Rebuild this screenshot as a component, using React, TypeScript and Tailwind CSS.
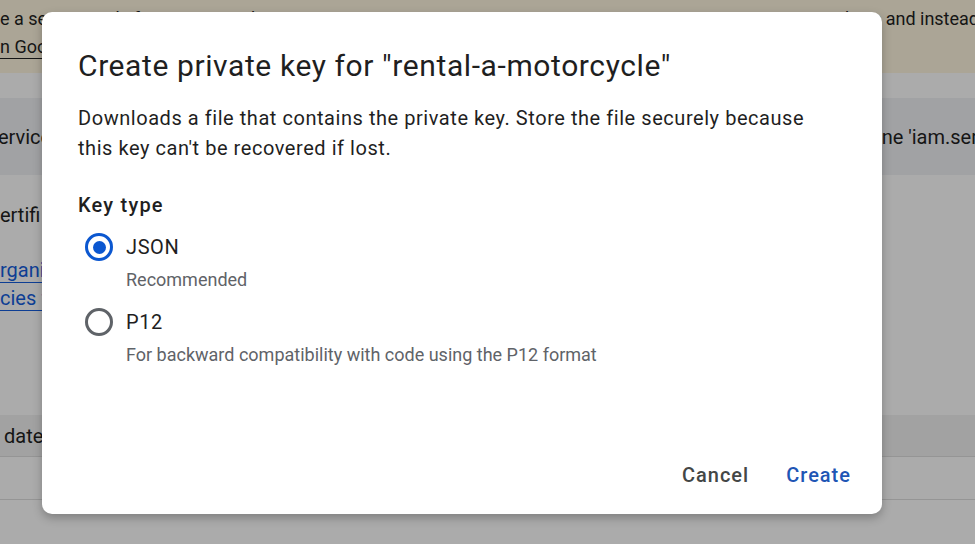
import React from "react";

const font = { fontFamily: "Roboto, 'Noto Sans', Arial, sans-serif" };

function Radio({ checked }: { checked: boolean }) {
  return (
    <div className="ml-[7px] mr-[13px] w-[28px] h-[28px] flex justify-center items-center">
      <div
        className={
          "w-[28px] h-[28px] rounded-full border-[3px] flex items-center justify-center " +
          (checked ? "border-[#0b57d0]" : "border-[#5f6368]")
        }
      >
        {checked && <div className="w-[13px] h-[13px] rounded-full bg-[#0b57d0]" />}
      </div>
    </div>
  );
}

export default function App() {
  return (
    <div className="relative w-[975px] h-[544px] overflow-hidden bg-[#ababab] text-[#151515]" style={font}>
      {/* background page (under scrim) */}
      <div className="flex flex-col w-full">
        <div className="h-[73px] bg-[#aba596] text-[18px] flex flex-col pt-[4px]">
          <div className="flex justify-between whitespace-nowrap h-[28px] items-center overflow-hidden">
            <span>e a security risk if compromised. We</span>
            <span className="mr-[-4px]">keys and instead</span>
          </div>
          <div className="h-[28px] flex items-center whitespace-nowrap">
            <span className="underline underline-offset-[5px] decoration-[1px]">n Google Cloud</span>
          </div>
        </div>
        <div className="h-[25px]" />
        <div className="h-[77px] bg-[#a1a2a4] text-[20px] flex justify-between items-center whitespace-nowrap overflow-hidden">
          <span className="ml-[-2px]">ervice</span>
          <span className="mr-[-3px]">ne 'iam.ser</span>
        </div>
        <div className="h-[240px] text-[20px] whitespace-nowrap">
          <div className="h-[28px] mt-[26px] flex items-center">ertifi</div>
          <div className="h-[28px] mt-[27px] flex items-center text-[#0e3e94] underline underline-offset-[5px] decoration-[1px]">rgani</div>
          <div className="h-[28px] flex items-center text-[#0e3e94] underline underline-offset-[5px] decoration-[1px]">cies f</div>
        </div>
        <div className="h-[42px] bg-[#a2a2a2] text-[20px] flex items-center pl-[4px] border-b border-[#959595]">date</div>
        <div className="h-[43px] border-b border-[#959595]" />
      </div>

      {/* dialog */}
      <div className="absolute left-[42px] top-[12px] w-[840px] h-[502px] bg-white rounded-[10px] shadow-[0_4px_10px_rgba(0,0,0,0.25)] flex flex-col pl-[36px] pr-[31px] pt-[34px] pb-[24px] text-[#1f1f1f]">
        <h1 className="text-[30px] leading-[40px] text-[#1f1f1f] font-normal tracking-[0.6px] whitespace-nowrap">
          Create private key for "rental-a-motorcycle"
        </h1>
        <p className="mt-[17px] text-[20px] leading-[30px] text-[#1f1f1f] tracking-[0.55px] whitespace-nowrap">
          Downloads a file that contains the private key. Store the file securely because
          <br />
          this key can't be recovered if lost.
        </p>
        <div className="mt-[28px] text-[20px] leading-[28px] font-medium text-[#1f1f1f] tracking-[1.2px]">Key type</div>
        <div className="flex flex-col">
          <div className="flex items-center h-[30px] mt-[13px]">
            <Radio checked />
            <span className="text-[20px] text-[#1f1f1f] tracking-[0.6px]">JSON</span>
          </div>
          <div className="pl-[48px] text-[18px] leading-[24px] mt-[6px] text-[#5f6368]">Recommended</div>
          <div className="flex items-center h-[30px] mt-[15px]">
            <Radio checked={false} />
            <span className="text-[20px] text-[#1f1f1f] tracking-[0.6px]">P12</span>
          </div>
          <div className="pl-[48px] text-[18px] leading-[24px] mt-[6px] text-[#5f6368] whitespace-nowrap">
            For backward compatibility with code using the P12 format
          </div>
        </div>
        <div className="mt-auto flex justify-end items-center gap-[37px] text-[20px] font-medium tracking-[1px]">
          <span className="text-[#444746]">Cancel</span>
          <span className="text-[#1f56b5]">Create</span>
        </div>
      </div>
    </div>
  );
}
